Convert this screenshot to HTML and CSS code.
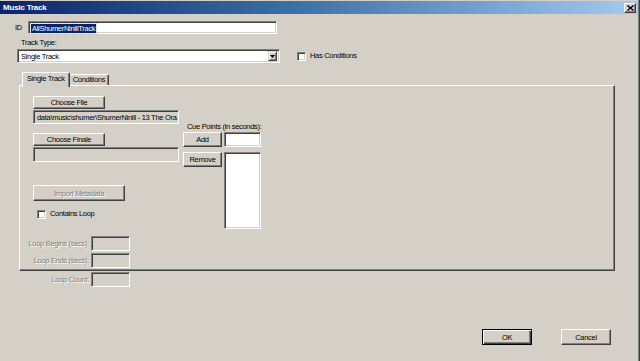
FILE: index.html
```html
<!DOCTYPE html>
<html>
<head>
<meta charset="utf-8">
<link rel="stylesheet" href="styles.css">
</head>
<body>
<div class="window">
  <div class="titlebar">
    <span class="title">Music Track</span>
    <span class="close"><svg width="7" height="6" viewBox="0 0 7 6"><path d="M0.5 0.5 L6.5 5.5 M6.5 0.5 L0.5 5.5" stroke="#000" stroke-width="1.4"/></svg></span>
  </div>
  <div class="content">
    <div class="id-row">
      <span class="lbl id-lbl">ID</span>
      <div class="field id-field"><span class="sel">AllShumerNinlilTrack</span></div>
    </div>
    <div class="lbl tt-lbl">Track Type:</div>
    <div class="combo-row">
      <div class="field combo"><span class="combo-text">Single Track</span><span class="arrow"><svg width="5" height="3" viewBox="0 0 5 3"><path d="M0 0 H5 L2.5 3 Z" fill="#000"/></svg></span></div>
      <div class="check has-cond"><span class="box"></span><span class="lbl">Has Conditions</span></div>
    </div>
    <div class="tabs">
      <div class="tab active">Single Track</div>
      <div class="tab">Conditions</div>
    </div>
    <div class="panel">
      <div class="cols">
        <div class="left">
          <div class="btn wide">Choose File</div>
          <div class="field ro path"><span>data\music\shumer\ShumerNinlil - 13 The Ora</span></div>
          <div class="btn wide finale">Choose Finale</div>
          <div class="field ro empty"></div>
          <div class="btn disabled import">Import Metadata</div>
          <div class="check loop-check"><span class="box"></span><span class="lbl">Contains Loop</span></div>
        </div>
        <div class="right">
          <div class="lbl cue-lbl">Cue Points (in seconds):</div>
          <div class="cue-row">
            <div class="btn small">Add</div>
            <div class="field cue-input"></div>
          </div>
          <div class="cue-row second">
            <div class="btn small">Remove</div>
            <div class="field listbox"></div>
          </div>
        </div>
      </div>
      <div class="loop">
        <span class="lbl dis">Loop Begins (secs):</span><div class="field ro loopf"></div>
        <span class="lbl dis">Loop Ends (secs):</span><div class="field ro loopf"></div>
        <span class="lbl dis count">Loop Count:</span><div class="field ro loopf count"></div>
      </div>
    </div>
    <div class="footer">
      <div class="btn default">OK</div>
      <div class="btn">Cancel</div>
    </div>
  </div>
</div>
</body>
</html>
```
FILE: styles.css
```css
* { box-sizing: border-box; }
html, body { margin: 0; padding: 0; }
body {
  width: 640px;
  height: 361px;
  overflow: hidden;
  background: #d4d0c8;
  font-family: "Liberation Sans", Arial, sans-serif;
  font-size: 7.5px;
  letter-spacing: -0.3px;
  color: #000;
}
.window {
  width: 640px;
  height: 361px;
  padding-top: 1px;
  border-right: 1px solid #404040;
  box-shadow: inset -1px 0 #808080;
  background: #d4d0c8;
}
.titlebar {
  height: 13px;
  margin-right: 1px;
  background: linear-gradient(to right, #0a246a, #3a6ea5 45%, #a6caf0);
  display: flex;
  align-items: center;
  justify-content: space-between;
  padding: 0 2px 0 3px;
}
.title {
  color: #fff;
  font-weight: bold;
  font-size: 8px;
  letter-spacing: -0.2px;
}
.close {
  width: 12px;
  height: 10px;
  background: #d4d0c8;
  border: 1px solid;
  border-color: #fff #404040 #404040 #fff;
  box-shadow: inset -1px -1px #808080;
  display: flex;
  align-items: center;
  justify-content: center;
}
.close svg { display: block; }
.lbl { white-space: nowrap; line-height: 10px; }
.field {
  background: #fff;
  border: 1px solid;
  border-color: #808080 #fff #fff #808080;
  box-shadow: inset 1px 1px #404040, inset -1px -1px #d4d0c8;
}
.field.ro { background: #d4d0c8; }
.id-row {
  display: flex;
  align-items: center;
  margin-top: 7px;
  height: 13px;
}
.id-lbl { margin-left: 15px; width: 13px; }
.id-field {
  width: 249px;
  height: 13px;
  padding: 2px 0 0 2px;
  line-height: 8px;
}
.sel {
  display: inline-block;
  background: #0a246a;
  color: #fff;
  padding: 0 1px;
  line-height: 9px;
  outline: 1px dotted #d4d0c8;
}
.tt-lbl { margin: 4px 0 0 21px; }
.combo-row {
  display: flex;
  align-items: center;
  margin-top: 1px;
  height: 14px;
}
.combo {
  margin-left: 17px;
  width: 263px;
  height: 14px;
  display: flex;
  align-items: center;
  justify-content: space-between;
  padding: 2px 2px 2px 3px;
}
.arrow {
  width: 9px;
  height: 10px;
  background: #d4d0c8;
  border: 1px solid;
  border-color: #d4d0c8 #404040 #404040 #d4d0c8;
  box-shadow: inset 1px 1px #fff, inset -1px -1px #808080;
  display: flex;
  align-items: center;
  justify-content: center;
}
.arrow svg { display: block; }
.check { display: flex; align-items: center; }
.box {
  width: 9px;
  height: 9px;
  background: #fff;
  border: 1px solid;
  border-color: #808080 #fff #fff #808080;
  box-shadow: inset 1px 1px #404040, inset -1px -1px #d4d0c8;
  margin-right: 4px;
}
.has-cond { margin-left: 17px; }
.tabs {
  display: flex;
  align-items: flex-start;
  margin: 9px 0 0 22px;
  height: 13px;
  position: relative;
  z-index: 1;
}
.tab {
  height: 11px;
  margin-top: 2px;
  padding: 0 3px;
  line-height: 10px;
  border: 1px solid;
  border-bottom: none;
  border-color: #fff #404040 transparent #fff;
  box-shadow: inset -1px 0 #808080;
  background: #d4d0c8;
  border-radius: 2px 2px 0 0;
}
.tab.active {
  height: 15px;
  margin-top: 0;
  padding: 0 4px;
  line-height: 11px;
  margin-right: -1px;
  position: relative;
  z-index: 2;
}
.tab.active + .tab { border-left-color: #fff; }
.panel {
  margin-left: 19px;
  width: 596px;
  height: 186px;
  border: 1px solid;
  border-color: #fff #404040 #404040 #fff;
  box-shadow: inset -1px -1px #808080;
  padding: 10px 0 0 13px;
}
.cols { display: flex; align-items: flex-start; height: 140px; }
.left { width: 146px; display: flex; flex-direction: column; align-items: flex-start; }
.btn {
  background: #d4d0c8;
  border: 1px solid;
  border-color: #fff #404040 #404040 #fff;
  box-shadow: inset -1px -1px #808080;
  display: flex;
  align-items: center;
  justify-content: center;
  white-space: nowrap;
  width: 50px;
  height: 16px;
}
.btn.wide { width: 72px; height: 13px; }
.path {
  margin-top: 1px;
  width: 146px;
  height: 14px;
  padding: 2px 0 0 3px;
  line-height: 9px;
  white-space: nowrap;
  overflow: hidden;
}
.finale { margin-top: 9px; }
.empty { margin-top: 1px; width: 146px; height: 15px; }
.import { margin-top: 23px; width: 92px; height: 16px; }
.disabled, .dis { color: #808080; text-shadow: 1px 1px #fff; }
.loop-check { margin-top: 8px; margin-left: 4px; }
.right { margin-left: 4px; padding-top: 26px; }
.cue-lbl { margin-left: 4px; }
.cue-row { display: flex; align-items: flex-start; margin-top: 0; }
.cue-row.second { margin-top: 5px; }
.btn.small { width: 39px; height: 15px; }
.cue-input { margin-left: 2px; width: 37px; height: 15px; }
.listbox { margin-left: 2px; width: 37px; height: 77px; }
.loop {
  margin-left: -12px;
  display: grid;
  grid-template-columns: 70px 39px;
  row-gap: 2px;
  align-items: center;
}
.loop .lbl { text-align: right; padding-right: 2px; }
.loopf { height: 15px; }
.loop .count { margin-top: 2px; }
.footer {
  display: flex;
  justify-content: flex-end;
  gap: 29px;
  padding-right: 28px;
  margin-top: 58px;
}
.btn.default {
  border: 1px solid #000;
  box-shadow: inset 1px 1px #fff, inset -1px -1px #404040, inset -2px -2px #808080;
}
```
